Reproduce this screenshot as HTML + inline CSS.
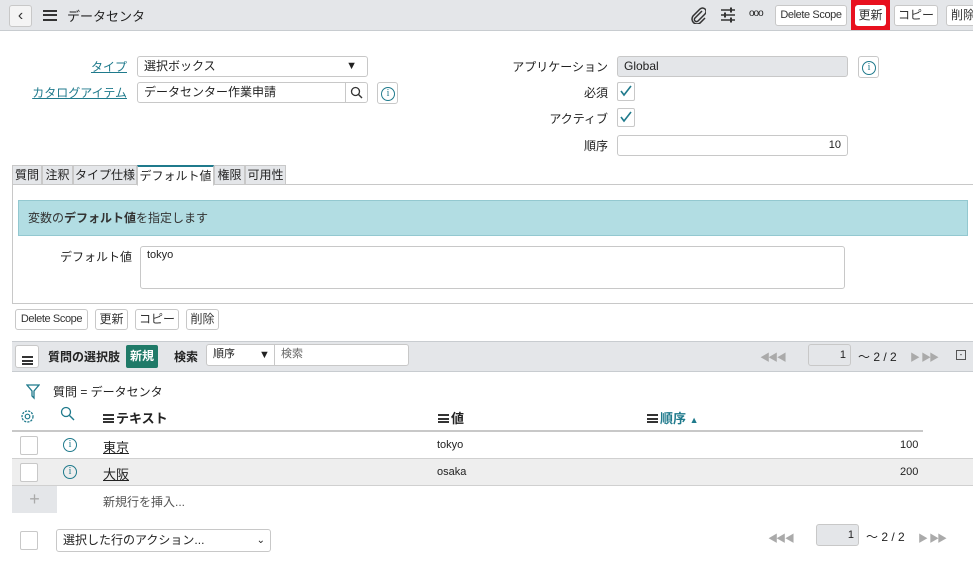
<!DOCTYPE html>
<html><head><meta charset="utf-8"><style>
*{box-sizing:border-box;margin:0;padding:0}
body{width:973px;height:563px;overflow:hidden;background:#fff;font-family:"Liberation Sans","Noto Sans CJK JP",sans-serif;font-size:12px;color:#222;position:relative;white-space:nowrap}
.a{position:absolute}
.btn{position:absolute;border:1px solid #c8c8c8;border-radius:3px;background:#fff;font-size:12px;text-align:center;line-height:19px;height:21px;color:#333;white-space:nowrap;overflow:hidden}
.ds{font-size:11px;letter-spacing:-0.4px}
.lbl{position:absolute;text-align:right;font-size:12px}
.lnk{color:#1f7a8c;text-decoration:underline}
.inp{position:absolute;border:1px solid #c8c8c8;border-radius:3px;background:#fff;padding-left:6px;line-height:19px;height:21px}
.cb{position:absolute;border:1px solid #c8c8c8;border-radius:2px;background:#fff;width:18px;height:19px}
.tab{position:absolute;top:165px;height:20px;border:1px solid #c8c8c8;background:#e4e6e9;line-height:18px;text-align:center;font-size:12px}
.ham{display:inline-block;width:13px;height:10px;border-top:2px solid #333;border-bottom:2px solid #333;position:relative}
.ham:after{content:"";position:absolute;left:0;right:0;top:2px;border-top:2px solid #333}
.info{position:absolute;width:14px;height:14px;border:1px solid #1f7a8c;border-radius:50%;color:#1f7a8c;font-size:10px;line-height:12px;text-align:center;font-family:"Liberation Serif",serif}
</style></head><body>
<div class="a" style="left:0;top:0;width:973px;height:31px;background:#e4e6e9;border-bottom:1px solid #c8ccd0"></div>
<div class="btn" style="left:9px;top:5px;width:23px;height:22px;background:#f4f4f4;font-size:16px;line-height:19px">&#8249;</div>
<div class="a" style="left:43px;top:10px"><span class="ham" style="width:14px;height:11px"></span></div>
<div class="a" style="left:67px;top:6px;font-size:13px">データセンタ</div>
<svg class="a" style="left:690px;top:6px" width="16" height="18" viewBox="0 0 16 18"><path d="M12 5 L5 12 a2 2 0 0 0 3 3 l7-7 a3.5 3.5 0 0 0-5-5 l-7 7 a5 5 0 0 0 7 7 l5-5" fill="none" stroke="#333" stroke-width="1.5"/></svg>
<svg class="a" style="left:719px;top:6px" width="18" height="18"><path d="M2 4h14M2 9h14M2 14h14" stroke="#333" stroke-width="1.5"/><rect x="11" y="1.5" width="2" height="5" fill="#333"/><rect x="5" y="6.5" width="2" height="5" fill="#333"/><rect x="11" y="11.5" width="2" height="5" fill="#333"/></svg>
<div class="a" style="left:749px;top:8px;font-size:10px;letter-spacing:-1px">ooo</div>
<div class="btn ds" style="left:775px;top:5px;width:72px">Delete Scope</div>
<div class="a" style="left:851px;top:0;width:39px;height:30px;background:#e8101e"></div>
<div class="btn" style="left:855px;top:5px;width:31px;height:21px;border-color:#fff">更新</div>
<div class="btn" style="left:894px;top:5px;width:44px">コピー</div>
<div class="btn" style="left:946px;top:5px;width:34px;text-align:left;padding-left:4px">削除</div>
<div class="lbl" style="left:20px;width:107px;top:58px"><span class="lnk">タイプ</span></div>
<div class="inp" style="left:137px;top:56px;width:231px">選択ボックス<span style="position:absolute;right:10px;font-size:11px">▼</span></div>
<div class="lbl" style="left:20px;width:107px;top:84px"><span class="lnk">カタログアイテム</span></div>
<div class="inp" style="left:137px;top:82px;width:231px">データセンター作業申請<span style="position:absolute;right:0;top:0;width:22px;height:19px;border-left:1px solid #c8c8c8"></span>
<svg style="position:absolute;right:4px;top:3px" width="13" height="13"><circle cx="5.5" cy="5.5" r="4" fill="none" stroke="#333" stroke-width="1.3"/><path d="M8.5 8.5L12 12" stroke="#333" stroke-width="1.4"/></svg></div>
<div class="btn" style="left:377px;top:82px;width:21px;height:22px"></div><div class="info" style="left:381px;top:87px">i</div>
<div class="lbl" style="left:480px;width:128px;top:58px">アプリケーション</div>
<div class="inp" style="left:617px;top:56px;width:231px;background:#e4e6e9">Global</div>
<div class="btn" style="left:858px;top:56px;width:21px;height:22px"></div><div class="info" style="left:862px;top:61px">i</div>
<div class="lbl" style="left:480px;width:128px;top:84px">必須</div>
<div class="cb" style="left:617px;top:82px"></div><svg class="a" style="left:619px;top:84px" width="14" height="14"><path d="M2 7l3 4 7-9" fill="none" stroke="#1f7a8c" stroke-width="1.6"/></svg>
<div class="lbl" style="left:480px;width:128px;top:110px">アクティブ</div>
<div class="cb" style="left:617px;top:108px"></div><svg class="a" style="left:619px;top:110px" width="14" height="14"><path d="M2 7l3 4 7-9" fill="none" stroke="#1f7a8c" stroke-width="1.6"/></svg>
<div class="lbl" style="left:480px;width:128px;top:137px">順序</div>
<div class="inp" style="left:617px;top:135px;width:231px;text-align:right;padding-right:6px;font-size:11px">10</div>
<div class="a" style="left:12px;top:184px;width:970px;height:120px;border:1px solid #c8c8c8"></div>
<div class="tab" style="left:12px;width:30px">質問</div>
<div class="tab" style="left:42px;width:31px">注釈</div>
<div class="tab" style="left:73px;width:64px">タイプ仕様</div>
<div class="tab" style="left:137px;width:77px;background:#fff;border-top:2px solid #1f7a8c;border-bottom-color:#fff;height:21px">デフォルト値</div>
<div class="tab" style="left:214px;width:31px">権限</div>
<div class="tab" style="left:245px;width:41px">可用性</div>
<div class="a" style="left:18px;top:200px;width:950px;height:36px;background:#b2dde3;border:1px solid #93c8d0;padding:8px 9px;font-size:12px;color:#333">変数の<b>デフォルト値</b>を指定します</div>
<div class="lbl" style="left:20px;width:112px;top:248px">デフォルト値</div>
<div class="a" style="left:140px;top:246px;width:705px;height:43px;border:1px solid #c8c8c8;border-radius:3px;padding:2px 6px;font-size:11px">tokyo</div>
<div class="btn ds" style="left:15px;top:309px;width:73px">Delete Scope</div>
<div class="btn" style="left:95px;top:309px;width:33px">更新</div>
<div class="btn" style="left:135px;top:309px;width:44px">コピー</div>
<div class="btn" style="left:186px;top:309px;width:33px">削除</div>
<div class="a" style="left:12px;top:341px;width:961px;height:31px;background:#e4e6e9;border-top:1px solid #c8ccd0;border-bottom:1px solid #c8ccd0"></div>
<div class="btn" style="left:15px;top:345px;width:24px;height:23px;padding-top:6px"><span class="ham" style="width:11px;height:9px"></span></div>
<div class="a" style="left:48px;top:348px;font-weight:bold">質問の選択肢</div>
<div class="a" style="left:126px;top:345px;width:32px;height:23px;background:#1f7a68;color:#fff;border-radius:2px;text-align:center;line-height:22px;font-weight:bold">新規</div>
<div class="a" style="left:174px;top:348px;font-weight:bold">検索</div>
<div class="inp" style="left:206px;top:344px;width:203px;height:22px;font-size:11px">順序<span style="position:absolute;left:52px;top:1px">▼</span><span style="position:absolute;left:67px;top:0;height:20px;border-left:1px solid #c8c8c8;padding-left:6px;color:#666">検索</span></div>
<div class="a" style="left:760px;top:349px;color:#aaa;font-size:10px;letter-spacing:-2px">◀◀ ◀</div>
<div class="a" style="left:808px;top:344px;width:43px;height:22px;border:1px solid #c8c8c8;border-radius:3px;background:#e4e6e9;text-align:right;padding-right:4px;line-height:20px;font-size:11px">1</div>
<div class="a" style="left:858px;top:348px">〜 2 / 2</div>
<div class="a" style="left:910px;top:349px;color:#aaa;font-size:10px;letter-spacing:-2px">▶&nbsp;&nbsp;&nbsp; ▶▶</div>
<div class="a" style="left:956px;top:350px;width:10px;height:10px;border:1px solid #555;font-size:8px;line-height:7px;text-align:center">-</div>
<svg class="a" style="left:26px;top:383px" width="14" height="17"><path d="M1 2h12l-5 6v7l-2-2v-5z" fill="none" stroke="#1f7a8c" stroke-width="1.3"/></svg>
<div class="a" style="left:53px;top:383px">質問 = データセンタ</div>
<svg class="a" style="left:19px;top:408px" width="17" height="17"><circle cx="8.5" cy="8.5" r="5.5" fill="none" stroke="#1f7a8c" stroke-width="1.3" stroke-dasharray="2.2 1.1"/><circle cx="8.5" cy="8.5" r="2.3" fill="none" stroke="#1f7a8c" stroke-width="1.2"/></svg>
<svg class="a" style="left:60px;top:406px" width="16" height="16"><circle cx="6" cy="6" r="4.5" fill="none" stroke="#1f7a8c" stroke-width="1.3"/><path d="M9.5 9.5L14 14" stroke="#1f7a8c" stroke-width="1.4"/></svg>
<div class="a" style="left:103px;top:408px;font-weight:bold;font-size:13px"><span class="ham" style="width:11px;height:9px;margin-right:2px"></span>テキスト</div>
<div class="a" style="left:438px;top:408px;font-weight:bold;font-size:13px"><span class="ham" style="width:11px;height:9px;margin-right:2px"></span>値</div>
<div class="a" style="left:647px;top:408px;font-weight:bold;font-size:13px;color:#1f7a8c"><span class="ham" style="width:11px;height:9px;margin-right:2px"></span>順序 <span style="font-size:9px">▲</span></div>
<div class="a" style="left:12px;top:430px;width:911px;height:2px;background:#c8c8c8"></div>
<div class="a" style="left:12px;top:432px;width:961px;height:27px;background:#fff;border-bottom:1px solid #d0d0d0"></div>
<div class="a" style="left:12px;top:459px;width:961px;height:27px;background:#eeeeee;border-bottom:1px solid #d0d0d0"></div>
<div class="a" style="left:12px;top:486px;width:45px;height:27px;background:#e4e6e9;color:#aaa;font-size:18px;text-align:center;line-height:26px">+</div>
<div class="cb" style="left:20px;top:436px"></div>
<div class="cb" style="left:20px;top:463px"></div>
<div class="info" style="left:63px;top:438px">i</div>
<div class="info" style="left:63px;top:465px">i</div>
<div class="a" style="left:103px;top:437px;text-decoration:underline;font-size:13px">東京</div>
<div class="a" style="left:103px;top:464px;text-decoration:underline;font-size:13px">大阪</div>
<div class="a" style="left:437px;top:439px;font-size:11px">tokyo</div>
<div class="a" style="left:437px;top:466px;font-size:11px">osaka</div>
<div class="a" style="left:900px;top:439px;font-size:11px">100</div>
<div class="a" style="left:900px;top:466px;font-size:11px">200</div>
<div class="a" style="left:103px;top:493px;color:#555">新規行を挿入...</div>
<div class="cb" style="left:20px;top:531px"></div>
<div class="inp" style="left:56px;top:529px;width:215px;height:23px;line-height:21px">選択した行のアクション...<span style="position:absolute;right:5px;font-size:10px">&#8964;</span></div>
<div class="a" style="left:768px;top:530px;color:#aaa;font-size:10px;letter-spacing:-2px">◀◀ ◀</div>
<div class="a" style="left:816px;top:524px;width:43px;height:22px;border:1px solid #c8c8c8;border-radius:3px;background:#e4e6e9;text-align:right;padding-right:4px;line-height:20px;font-size:11px">1</div>
<div class="a" style="left:866px;top:528px">〜 2 / 2</div>
<div class="a" style="left:918px;top:530px;color:#aaa;font-size:10px;letter-spacing:-2px">▶&nbsp;&nbsp;&nbsp; ▶▶</div>
</body></html>
